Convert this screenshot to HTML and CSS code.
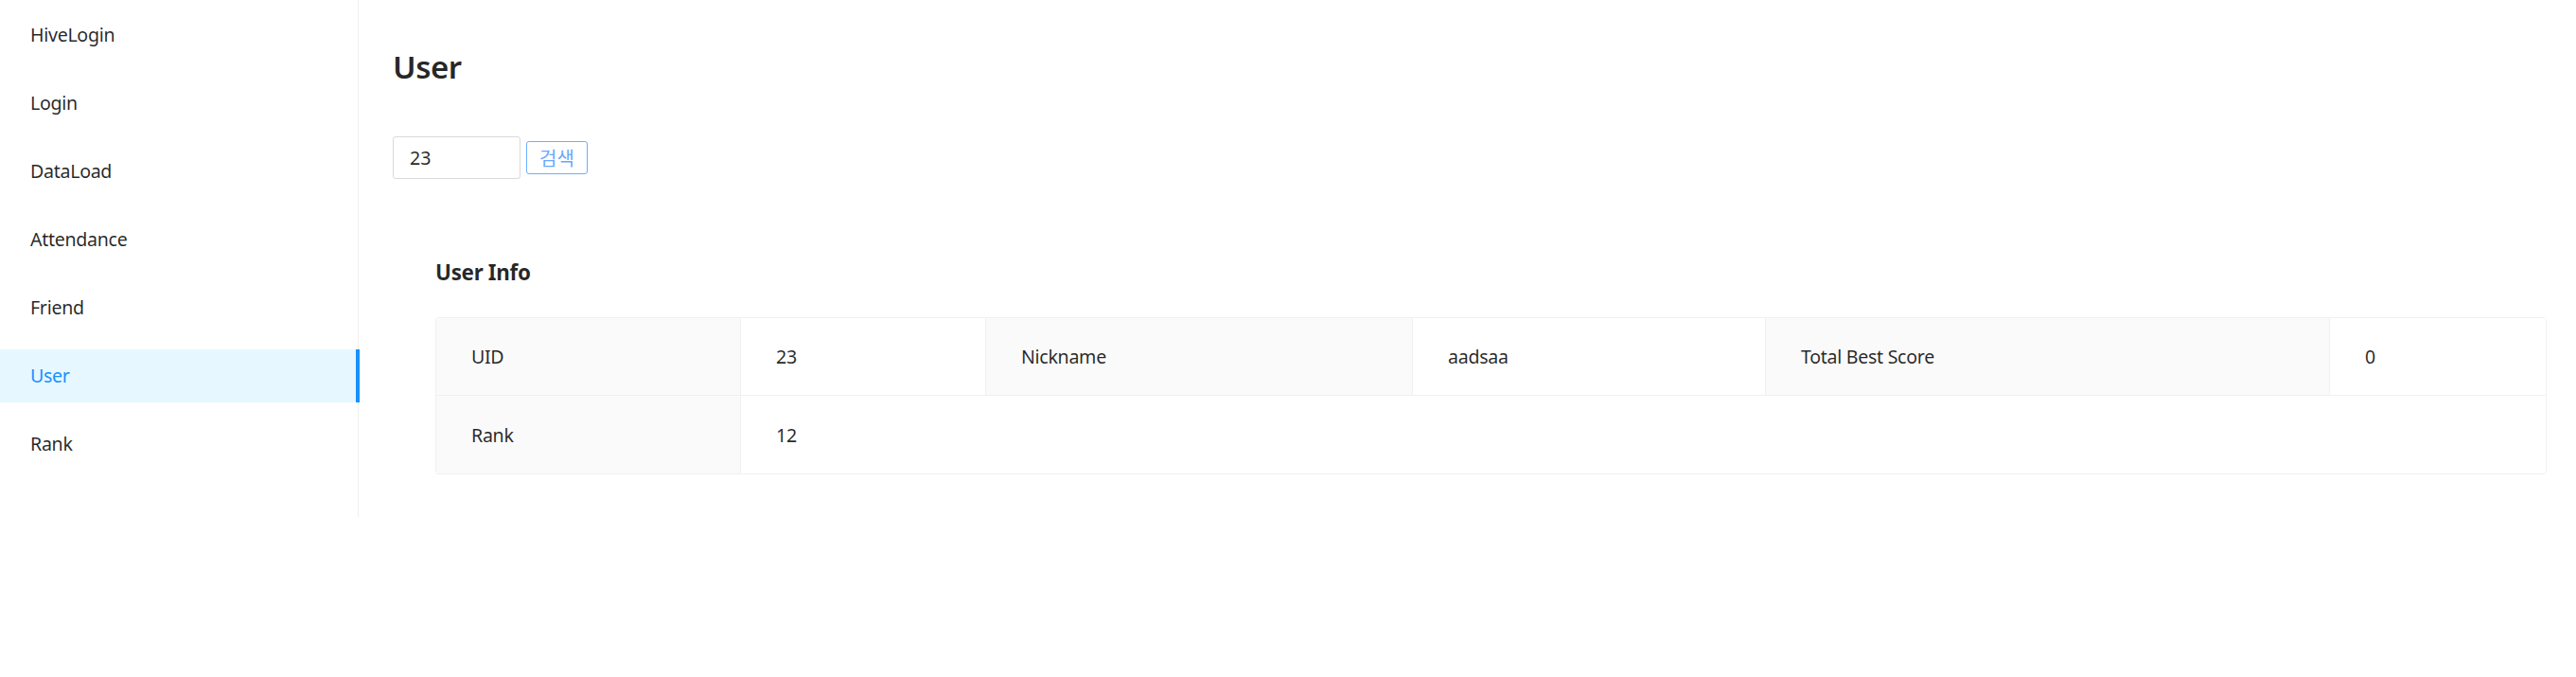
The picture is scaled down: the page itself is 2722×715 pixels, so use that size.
FILE: index.html
```html
<!DOCTYPE html>
<html lang="ko">
<head>
<meta charset="utf-8">
<title>User</title>
<link rel="stylesheet" href="styles.css">
</head>
<body>
<div class="layout">
  <aside class="sider">
    <ul class="menu">
      <li class="menu-item">HiveLogin</li>
      <li class="menu-item">Login</li>
      <li class="menu-item">DataLoad</li>
      <li class="menu-item">Attendance</li>
      <li class="menu-item">Friend</li>
      <li class="menu-item active">User</li>
      <li class="menu-item">Rank</li>
    </ul>
  </aside>
  <main class="content">
    <h3 class="page-title">User</h3>
    <div class="search">
      <input class="search-input" type="text" value="23">
      <button class="search-btn" type="button">검색</button>
    </div>
    <section class="desc">
      <div class="desc-title">User Info</div>
      <table class="desc-table">
        <colgroup>
          <col class="c1"><col class="c2"><col class="c3"><col class="c4"><col class="c5"><col class="c6">
        </colgroup>
        <tr>
          <th class="label">UID</th>
          <td class="value">23</td>
          <th class="label">Nickname</th>
          <td class="value">aadsaa</td>
          <th class="label">Total Best Score</th>
          <td class="value">0</td>
        </tr>
        <tr>
          <th class="label">Rank</th>
          <td class="value" colspan="5">12</td>
        </tr>
      </table>
    </section>
  </main>
</div>
</body>
</html>
```

FILE: styles.css
```css
html, body {
  margin: 0;
  padding: 0;
  background: #ffffff;
}
body {
  font-family: "Noto Sans", "Noto Sans CJK KR", sans-serif;
  font-size: 19.6px;
  color: rgba(0, 0, 0, 0.85);
}
.layout {
  display: flex;
  align-items: flex-start;
}
.sider {
  width: 378px;
  height: 546px;
  border-right: 1px solid #f0f0f0;
  flex: none;
}
.menu {
  list-style: none;
  margin: 0;
  padding: 9px 0 0;
  display: flex;
  flex-direction: column;
  gap: 16px;
}
.menu-item {
  height: 56px;
  line-height: 56px;
  padding-left: 32px;
  position: relative;
  letter-spacing: -0.3px;
}
.menu-item.active {
  background: #e6f7ff;
  color: #1890ff;
  margin-right: -2px;
}
.menu-item.active::after {
  content: "";
  position: absolute;
  right: 0;
  top: 0;
  bottom: 0;
  width: 4px;
  background: #1890ff;
}
.content {
  flex: 1;
  padding: 0 31px 0 36px;
}
.page-title {
  margin: 48px 0 0;
  font-size: 33px;
  font-weight: 600;
  line-height: 46px;
  color: rgba(0, 0, 0, 0.85);
  letter-spacing: -0.5px;
}
.search {
  display: flex;
  align-items: center;
  gap: 6px;
  margin-top: 50px;
}
.search-input {
  box-sizing: border-box;
  width: 135px;
  height: 45px;
  border: 1px solid #d9d9d9;
  border-radius: 3px;
  padding: 0 17px;
  font-family: inherit;
  font-size: 19.6px;
  color: rgba(0, 0, 0, 0.85);
  outline: none;
}
.search-btn {
  box-sizing: border-box;
  width: 65px;
  height: 35px;
  border: 1.5px solid #69b1ff;
  border-radius: 3px;
  background: #ffffff;
  color: #69a8ff;
  font-family: "Noto Sans CJK KR", sans-serif;
  font-size: 20px;
  padding: 0;
  line-height: 1;
}
.desc {
  margin: 81px 0 0 45px;
}
.desc-title {
  font-size: 22.4px;
  font-weight: 700;
  line-height: 36px;
  margin-bottom: 29px;
  letter-spacing: -0.3px;
}
.desc-table {
  width: 100%;
  border-collapse: separate;
  border-spacing: 0;
  table-layout: fixed;
  border: 1px solid #f0f0f0;
  border-radius: 3px;
}
.c1 { width: 322px; }
.c2 { width: 259px; }
.c3 { width: 451px; }
.c4 { width: 373px; }
.c5 { width: 596px; }
.c6 { width: auto; }
.desc-table th,
.desc-table td {
  height: 82px;
  box-sizing: border-box;
  padding: 0 33.6px 0 37px;
  text-align: left;
  font-weight: 400;
  vertical-align: middle;
  letter-spacing: -0.3px;
  border-right: 1px solid #f0f0f0;
  border-bottom: 1px solid #f0f0f0;
}
.desc-table tr:last-child th,
.desc-table tr:last-child td {
  border-bottom: none;
}
.desc-table tr > :last-child {
  border-right: none;
}
.label {
  background: #fafafa;
}
.value {
  background: #ffffff;
}
```
